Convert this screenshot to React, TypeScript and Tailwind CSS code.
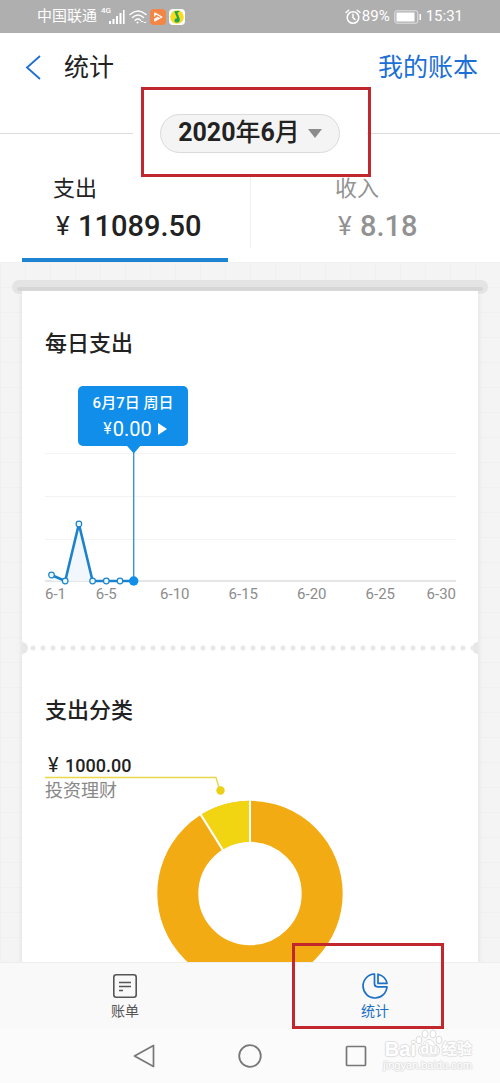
import React from "react";

const BASE_FONT = "font-[Roboto,'Noto_Sans_CJK_SC',sans-serif]";

const dayX = (day: number) => 6.5 + (day - 1) * 13.7;
const dailyY = [189, 195, 138, 195, 195, 195, 195];
const axisLabels: { day: number; x: number; anchor: "start" | "middle" | "end" }[] = [
  { day: 1, x: 0, anchor: "start" },
  { day: 5, x: dayX(5), anchor: "middle" },
  { day: 10, x: dayX(10), anchor: "middle" },
  { day: 15, x: dayX(15), anchor: "middle" },
  { day: 20, x: dayX(20), anchor: "middle" },
  { day: 25, x: dayX(25), anchor: "middle" },
  { day: 30, x: 411, anchor: "end" },
];

function StatusBar() {
  return (
    <div className="flex h-[33px] shrink-0 items-center justify-between bg-[#afafaf] px-[37px] text-white">
      <div className="flex items-center">
        <span className="text-[15px]">中国联通</span>
        <span className="ml-1 w-2 self-start text-[8px] font-medium leading-3">4G</span>
        <svg width="16" height="16" viewBox="0 0 16 16" fill="currentColor" className="mt-px">
          <path d="M0 12h2v3H0zM3.5 10h2v5h-2zM7 7h2v8H7zM10.5 4h2v11h-2zM14 1h1.6v14H14z" />
        </svg>
        <svg width="18" height="16" viewBox="0 0 18 16" fill="none" stroke="currentColor" strokeWidth="1.5" strokeLinecap="round" className="ml-1">
          <path d="M1 5.5Q9-1.5 17 5.5M3.5 8.5Q9 3.6 14.5 8.5M6.2 11.3Q9 8.8 11.6 11.3" />
          <circle cx="8.5" cy="13.6" r="1" fill="currentColor" stroke="none" />
          <path d="m12 13 1-1 1 1m1 0 1 1 1-1" strokeWidth="1" />
        </svg>
        <svg width="16" height="16" viewBox="0 0 16 16" className="ml-[3px]">
          <rect width="16" height="16" rx="4" fill="#f38545" />
          <path d="M4.8 7V4.2L11.800 8l-7 3.800V10.200L8 8.400" fill="none" stroke="#fff" strokeWidth="1.4" strokeLinejoin="round" strokeLinecap="round" />
        </svg>
        <svg width="16" height="16" viewBox="0 0 16 16" className="ml-[3px]">
          <rect width="16" height="16" rx="4" fill="#fff" />
          <circle cx="8" cy="8" r="6.8" fill="#f7dc20" />
          <path d="M5.3 2.2 11 1.7 8.5 4l2 5.2c1.2 2.8-1 4.6-3 4.3-3-.5-2.5-4.3.6-4.3L5.3 2.2Z" fill="#22a650" />
        </svg>
      </div>
      <div className="flex items-center">
        <svg width="16" height="16" viewBox="0 0 16 16" fill="none" stroke="currentColor" strokeWidth="1.5" strokeLinecap="round">
          <circle cx="8" cy="8.5" r="5.8" />
          <path d="M8 5.2v3.5l2 1.8M1 3.5 3.7 1.2M15 3.5l-2.7-2.3" />
        </svg>
        <span className="ml-px text-[15px]">89%</span>
        <svg width="28" height="14" viewBox="0 0 28 14" className="ml-1">
          <rect x=".8" y=".8" width="23" height="12.4" rx="2" fill="none" stroke="#e3e3e3" />
          <path d="M2.5 2.5h18v9h-18zM25.5 4h1.5v6h-1.5z" fill="#fff" />
        </svg>
        <span className="ml-1 text-[15px]">15:31</span>
      </div>
    </div>
  );
}

function DailyChart() {
  const points = dailyY.map((y, i) => `${dayX(i + 1)},${y}`);
  return (
    <div className="relative mt-[26px]">
      <svg viewBox="0 0 411 216" className="block w-full" role="img" aria-label="每日支出">
        <path d="M0 67.5h411M0 110.5h411M0 153.5h411" stroke="#f3f3f3" />
        <path d="M0 195h411" stroke="#dedede" strokeWidth="1.5" />
        <polygon points={`${points.join(" ")} ${dayX(1)},195`} fill="#f1f7fc" />
        <path d={`M${dayX(7)} 60V195`} stroke="#2d8fd5" strokeWidth="1.3" />
        <path d={`M${dayX(7) - 7} 59.5h14l-7 8z`} fill="#108ee9" />
        <polyline points={points.join(" ")} fill="none" stroke="#1c82cb" strokeWidth="2.6" strokeLinejoin="round" />
        {dailyY.slice(0, 6).map((y, i) => (
          <circle key={i} cx={dayX(i + 1)} cy={y} r="2.8" fill="#e9f8ff" stroke="#1c82cb" strokeWidth="1.2" />
        ))}
        <circle cx={dayX(7)} cy="195" r="4.7" fill="#108ee9" />
        {axisLabels.map((l) => (
          <text key={l.day} x={l.x} y="213" textAnchor={l.anchor} fontSize="15" fill="#8c8c8c">
            {`6-${l.day}`}
          </text>
        ))}
      </svg>
      <button type="button" className="absolute left-[33px] top-0 flex h-[60px] w-[110px] flex-col items-center justify-center rounded-[5px] bg-[#108ee9] pt-px text-white">
        <span className="text-[15px] font-medium leading-6">6月7日 周日</span>
        <span className="flex items-center pl-1 leading-7">
          <span className="mr-px text-[16px]">¥</span>
          <span className="text-[20px]">0.00</span>
          <svg width="9" height="12" viewBox="0 0 9 12" className="ml-[6px]"><path d="M0 0v12l9-6z" fill="#fff" /></svg>
        </span>
      </button>
    </div>
  );
}

function CategoryChart() {
  return (
    <div className="relative mt-6">
      <svg viewBox="0 0 411 238" className="block w-full" role="img" aria-label="支出分类">
        <path d="M0 26.5h171l4 13" fill="none" stroke="#ead84a" strokeWidth="1.5" />
        <circle cx="175.500" cy="39.500" r="4.2" fill="#ecd014" />
        <circle cx="205" cy="142.500" r="72.2" fill="none" stroke="#f2ab13" strokeWidth="41" />
        <path d="M205 49.800a92.7 92.7 0 0 0-49.1 14.1l21.7 34.8A51.7 51.7 0 0 1 205 90.800z" fill="#f2d512" />
        <path d="M205 48.500v43M155.4 63.100l23 36.8" stroke="#fff" strokeWidth="2" />
      </svg>
      <div className="absolute left-0 top-0">
        <p className="flex h-7 items-center pl-[3px] text-[#222]">
          <span className="w-[17px] text-[20px]">¥</span>
          <span className="text-[18px] font-medium">1000.00</span>
        </p>
        <p className="text-[18px] leading-6 text-[#888]">投资理财</p>
      </div>
    </div>
  );
}

function Watermark() {
  return (
    <div className="pointer-events-none absolute bottom-3 right-7 text-right font-['Liberation_Sans','Noto_Sans_CJK_SC',sans-serif] font-bold text-white [text-shadow:1px_0_1px_#dedede,-1px_0_1px_#dedede,0_1px_1px_#dedede,0_-1px_1px_#dedede]">
      <div className="flex items-center justify-end leading-5">
        <span className="text-[20px]">Bai</span>
        <span className="relative flex h-5 w-[26px] items-center justify-center">
          <svg width="28" height="28" viewBox="0 0 28 28" className="absolute -left-px -top-[10px]" fill="#fff" stroke="#dcdcdc">
            <ellipse cx="4" cy="11" rx="3" ry="3.8" />
            <ellipse cx="10" cy="5" rx="3" ry="4" />
            <ellipse cx="18" cy="5" rx="3" ry="4" />
            <ellipse cx="24" cy="11" rx="3" ry="3.8" />
            <path d="M14 10.5c-4 0-5 4-8 6-5 4-2 10.5 2 10.5h12c4 0 7-6.5 2-10.5-3-2-4-6-8-6z" />
          </svg>
          <span className="relative text-[14px]">du</span>
        </span>
        <span className="text-[15px]">经验</span>
      </div>
      <div className="text-[11px] font-normal leading-3">jingyan.baidu.com</div>
    </div>
  );
}

export default function App() {
  return (
    <div className={`${BASE_FONT} relative flex h-screen flex-col bg-white text-[#222]`}>
      <StatusBar />
      <header className="flex h-[68px] shrink-0 items-center pl-[25px] pr-[22px] pt-[2px]">
        <button type="button" aria-label="返回" className="text-[#1b6fd0]">
          <svg width="16" height="26" viewBox="0 0 16 26" fill="none" stroke="currentColor" strokeWidth="1.8"><path d="M15 1 2 12.500 15 24" /></svg>
        </button>
        <h1 className="ml-[23px] flex-1 text-[25px]">统计</h1>
        <a href="#ledger" className="text-[25px] text-[#1c6fd4]">我的账本</a>
      </header>

      <div className="flex h-[64px] shrink-0 items-center">
        <span className="h-px flex-1 bg-[#dcdcdc]" />
        <div className="relative mx-[27px]">
          <button type="button" className="flex h-[39px] w-[180px] items-center justify-center rounded-full border border-[#dadada] bg-[#f4f4f4] text-[25px] font-bold">
            2020<span className="font-medium">年</span>6<span className="font-medium">月</span>
            <svg width="14" height="9" viewBox="0 0 14 9" className="ml-2"><path d="M0 0h14L7 9z" fill="#8c8c8c" /></svg>
          </button>
          <div className="pointer-events-none absolute -bottom-6 -left-[19px] -right-[31px] -top-[27px] z-10 border-[3px] border-[#c1272d]" />
        </div>
        <span className="h-px flex-1 bg-[#dcdcdc]" />
      </div>

      <div className="grid h-[97px] shrink-0 grid-cols-2">
        <button type="button" className="mx-[22px] flex flex-col border-b-4 border-[#1c84d0] pl-[31px] pt-2 text-left">
          <span className="text-[22px] leading-8">支出</span>
          <span className="flex items-center leading-[42px]">
            <span className="w-[25px] pl-[3px] text-[26px]">¥</span>
            <span className="text-[29px] font-medium">11089.50</span>
          </span>
        </button>
        <div className="flex">
          <span className="mb-[14px] mt-3 w-px bg-[#efefef]" />
          <button type="button" className="flex flex-1 flex-col pl-[84px] pt-2 text-left text-[#929292]">
            <span className="text-[22px] leading-8">收入</span>
            <span className="flex items-center leading-[42px]">
              <span className="w-[25px] pl-[3px] text-[26px]">¥</span>
              <span className="text-[29px] font-medium">8.18</span>
            </span>
          </button>
        </div>
      </div>

      <main className="min-h-0 flex-1 overflow-y-auto bg-[#f4f4f4] bg-[linear-gradient(#f0f0f0_1px,transparent_1px),linear-gradient(90deg,#f0f0f0_1px,transparent_1px)] bg-[size:25px_25px] px-3 pt-[18px] [scrollbar-width:none]">
        <div className="h-[14px] rounded-full bg-[#e4e4e4] px-[5px] pt-[7px]">
          <div className="h-1 rounded-full bg-[#d6d6d6]" />
        </div>
        <div className="relative mx-[10px] -mt-[3px] bg-white shadow-[0_2px_5px_#dcdcdc]">
          <section className="pl-[23px] pr-[22px] pt-[37px]">
            <h2 className="text-[22px] font-medium leading-8">每日支出</h2>
            <DailyChart />
          </section>
          <div className="mt-10 flex h-3 items-center justify-between overflow-hidden">
            <span className="-ml-[6px] size-3 shrink-0 rounded-full bg-[#e7e7e7]" />
            <span className="h-[6px] flex-1 bg-[radial-gradient(circle,#e7e7e7_2px,transparent_3px)] bg-[size:10px_6px]" />
            <span className="-mr-[6px] size-3 shrink-0 rounded-full bg-[#e7e7e7]" />
          </div>
          <section className="pl-[23px] pr-[22px] pt-[41px]">
            <h2 className="text-[22px] font-medium leading-8">支出分类</h2>
            <CategoryChart />
          </section>
        </div>
      </main>

      <nav className="grid h-[67px] shrink-0 grid-cols-2 border-t border-[#eeeeee] bg-[#f9f9f9]">
        <a href="#bills" className="flex flex-col items-center pt-[11px] text-[#555]">
          <svg width="24" height="24" viewBox="0 0 24 24" fill="none" stroke="currentColor" strokeWidth="1.6">
            <rect x=".8" y=".8" width="22.4" height="22.4" rx="2.5" />
            <path d="M6 8.5h12M6 12.5h12M6 16.5h4" />
          </svg>
          <span className="mt-[3px] text-[14px] leading-5">账单</span>
        </a>
        <a href="#stats" className="relative flex flex-col items-center pt-[10px] text-[#1b6fc4]">
          <svg width="26" height="26" viewBox="0 0 26 26" fill="none" stroke="currentColor" strokeWidth="1.7" strokeLinejoin="round">
            <path d="M12.5 1A12 12 0 1 0 25 13.8H15.5q-3 0-3-3z" />
            <path d="M16 1.2V10.4h9Q23.8 3.3 16 1.2z" />
          </svg>
          <span className="mt-[2px] text-[14px] leading-5">统计</span>
          <span className="pointer-events-none absolute -top-5 bottom-0 left-[42px] right-[56px] border-[3px] border-[#c1272d]" />
        </a>
      </nav>

      <div className="relative flex h-[54px] shrink-0 items-center justify-center gap-[83px] bg-[#fbfbfb] text-[#777]">
        <button type="button" aria-label="返回键">
          <svg width="22" height="24" viewBox="0 0 22 24" fill="none" stroke="currentColor" strokeWidth="1.7" strokeLinejoin="round"><path d="M1.5 12 20.5 1.5v21z" /></svg>
        </button>
        <button type="button" aria-label="主屏幕">
          <svg width="24" height="24" viewBox="0 0 24 24" fill="none" stroke="currentColor" strokeWidth="1.8"><circle cx="12" cy="12" r="10.8" /></svg>
        </button>
        <button type="button" aria-label="最近任务">
          <svg width="22" height="22" viewBox="0 0 22 22" fill="none" stroke="currentColor" strokeWidth="1.7"><rect x="1.5" y="1.5" width="19" height="19" rx="1" /></svg>
        </button>
        <Watermark />
      </div>
    </div>
  );
}
